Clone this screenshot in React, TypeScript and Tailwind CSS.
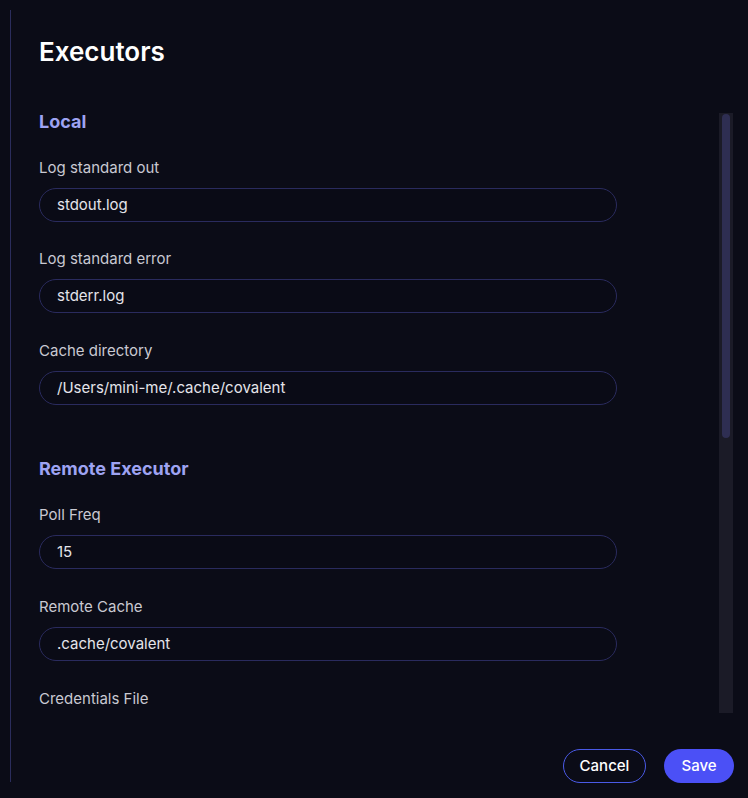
import React from "react";

const font = { fontFamily: "Inter, 'Noto Sans', sans-serif" };

function Field({ label, value, className = "" }: { label: string; value?: string; className?: string }) {
  return (
    <div className={`flex flex-col gap-[10px] ${className}`}>
      <div className="text-[15px] leading-5 text-[#c9c9d2]">{label}</div>
      {value !== undefined && (
        <div className="h-[34px] w-[578px] rounded-full border border-[#2a2b5e] bg-[#0a0b16] flex items-center pl-[17px] text-[15px] text-[#e4e4ea]">
          {value}
        </div>
      )}
    </div>
  );
}

function Section({ title, children, mb }: { title: string; children: React.ReactNode; mb: string }) {
  return (
    <div className="flex flex-col">
      <div className={`text-[18px] leading-5 font-bold text-[#9ea3f2] ${mb}`}>{title}</div>
      <div className="flex flex-col">{children}</div>
    </div>
  );
}

export default function App() {
  return (
    <div className="w-[748px] h-[798px] bg-[#0b0c17] flex overflow-hidden" style={font}>
      <div className="ml-[10px] mt-[10px] w-px h-[772px] bg-[#2b2d5c]" />
      <div className="flex-1 flex flex-col pl-[28px] pr-[14px] pt-[36px]">
        <div className="text-[26px] leading-8 font-semibold text-white">Executors</div>
        <div className="mt-[44px] h-[601px] flex overflow-hidden">
          <div className="w-[578px] flex flex-col gap-[54px]">
            <Section title="Local" mb="mb-[26px]">
              <Field label="Log standard out" value="stdout.log" />
              <Field label="Log standard error" value="stderr.log" className="mt-[27px]" />
              <Field label="Cache directory" value="/Users/mini-me/.cache/covalent" className="mt-[28px]" />
            </Section>
            <Section title="Remote Executor" mb="mb-[26px]">
              <Field label="Poll Freq" value="15" />
              <Field label="Remote Cache" value=".cache/covalent" className="mt-[28px]" />
              <Field label="Credentials File" value="" className="mt-[28px]" />
            </Section>
          </div>
          <div className="flex-1" />
          <div className="mt-px mr-px w-[14px] h-[600px] bg-[#1b1b27] flex justify-center pt-px">
            <div className="w-[8px] h-[324px] rounded-full bg-[#2e2e52]" />
          </div>
        </div>
        <div className="mt-[36px] flex justify-end gap-[18px]">
          <button className="h-[34px] w-[83px] rounded-full border border-[#4a5ae6] text-[15px] font-medium text-white">
            Cancel
          </button>
          <button className="h-[34px] w-[70px] rounded-full bg-[#4b50f6] text-[15px] font-medium text-white">
            Save
          </button>
        </div>
      </div>
    </div>
  );
}
